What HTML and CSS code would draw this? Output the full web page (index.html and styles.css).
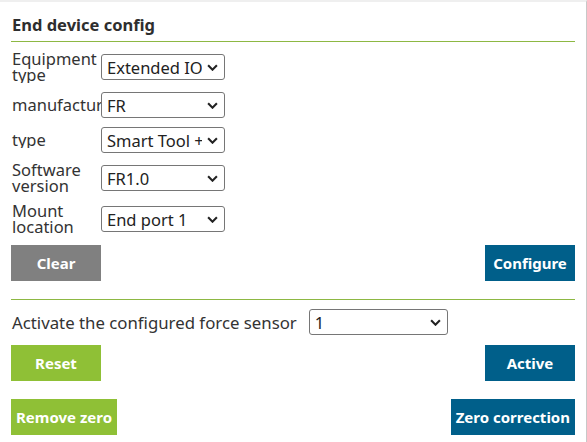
FILE: index.html
```html
<!DOCTYPE html>
<html>
<head>
<meta charset="utf-8">
<link rel="stylesheet" href="styles.css">
</head>
<body>
<div class="panel">
  <h2 class="title">End device config</h2>
  <div class="form">
    <div class="row">
      <label class="lbl">Equipment type</label>
      <span class="sel-wrap"><select class="sel"><option>Extended IO</option></select><svg class="chev" viewBox="0 0 10 6"><path d="M1 1 L5 5 L9 1"/></svg></span>
    </div>
    <div class="row">
      <label class="lbl single">manufacturer</label>
      <span class="sel-wrap"><select class="sel"><option>FR</option></select><svg class="chev" viewBox="0 0 10 6"><path d="M1 1 L5 5 L9 1"/></svg></span>
    </div>
    <div class="row">
      <label class="lbl">type</label>
      <span class="sel-wrap"><select class="sel"><option>Smart Tool + force sensor</option></select><svg class="chev" viewBox="0 0 10 6"><path d="M1 1 L5 5 L9 1"/></svg></span>
    </div>
    <div class="row">
      <label class="lbl">Software version</label>
      <span class="sel-wrap"><select class="sel"><option>FR1.0</option></select><svg class="chev" viewBox="0 0 10 6"><path d="M1 1 L5 5 L9 1"/></svg></span>
    </div>
    <div class="row">
      <label class="lbl">Mount location</label>
      <span class="sel-wrap"><select class="sel"><option>End port 1</option></select><svg class="chev" viewBox="0 0 10 6"><path d="M1 1 L5 5 L9 1"/></svg></span>
    </div>
  </div>
  <div class="btn-row first">
    <button class="btn gray">Clear</button>
    <button class="btn blue">Configure</button>
  </div>
  <div class="section">
    <div class="force-row">
      <label class="force-lbl">Activate the configured force sensor</label>
      <span class="sel-wrap"><select class="sel wide"><option>1</option></select><svg class="chev" viewBox="0 0 10 6"><path d="M1 1 L5 5 L9 1"/></svg></span>
    </div>
    <div class="btn-row">
      <button class="btn green">Reset</button>
      <button class="btn blue">Active</button>
    </div>
    <div class="btn-row lower">
      <button class="btn green">Remove zero</button>
      <button class="btn blue">Zero correction</button>
    </div>
  </div>
</div>
</body>
</html>
```

FILE: styles.css
```css
html, body {
  margin: 0;
  padding: 0;
  background: #ffffff;
}

body {
  font-family: "Noto Sans", "DejaVu Sans", sans-serif;
  color: #333333;
}

.panel {
  box-sizing: border-box;
  width: 587px;
  height: 442px;
  border-top: 2px solid #efefef;
  border-right: 1px solid #c8c8c8;
  padding: 0 11px 0 11px;
}

.title {
  margin: 0;
  padding: 12px 0 6px 1px;
  font-size: 16.5px;
  line-height: 21px;
  font-weight: bold;
  color: #2e2e2e;
  border-bottom: 1px solid #8db843;
}

.form {
  margin-top: 9px;
  display: flex;
  flex-direction: column;
  gap: 9px;
}

.row {
  display: flex;
  align-items: center;
  min-height: 26px;
}

.lbl {
  width: 90px;
  padding-left: 1px;
  box-sizing: border-box;
  font-size: 16.5px;
  line-height: 16px;
  overflow: hidden;
}

.lbl.single {
  white-space: nowrap;
}

.sel-wrap {
  position: relative;
  display: inline-block;
}

.sel {
  -webkit-appearance: none;
  appearance: none;
  box-sizing: border-box;
  width: 124px;
  height: 26px;
  margin: 0;
  padding: 0 22px 0 5px;
  border: 1px solid #767676;
  border-radius: 3px;
  background: #ffffff;
  font-family: "Noto Sans", "DejaVu Sans", sans-serif;
  font-size: 16.5px;
  color: #222222;
  white-space: nowrap;
}

.sel.wide {
  width: 139px;
}

.chev {
  position: absolute;
  right: 7px;
  top: 10px;
  width: 11px;
  height: 7px;
  fill: none;
  stroke: #222222;
  stroke-width: 1.9;
  pointer-events: none;
}

.btn-row {
  display: flex;
  justify-content: space-between;
  margin-top: 10px;
}

.btn-row.lower {
  margin-top: 18px;
}

.btn {
  min-width: 90px;
  height: 36px;
  padding: 0 5px;
  border: none;
  border-radius: 0;
  color: #ffffff;
  font-family: "Noto Sans", "DejaVu Sans", sans-serif;
  font-size: 15px;
  font-weight: bold;
}

.gray { background: #808080; }
.blue { background: #005f8a; }
.green { background: #8fc036; }

.section {
  margin-top: 18px;
  border-top: 1px solid #8db843;
}

.force-row {
  display: flex;
  align-items: center;
  margin-top: 9px;
}

.force-lbl {
  padding-left: 1px;
  font-size: 16.8px;
  margin-right: 12px;
}
```
